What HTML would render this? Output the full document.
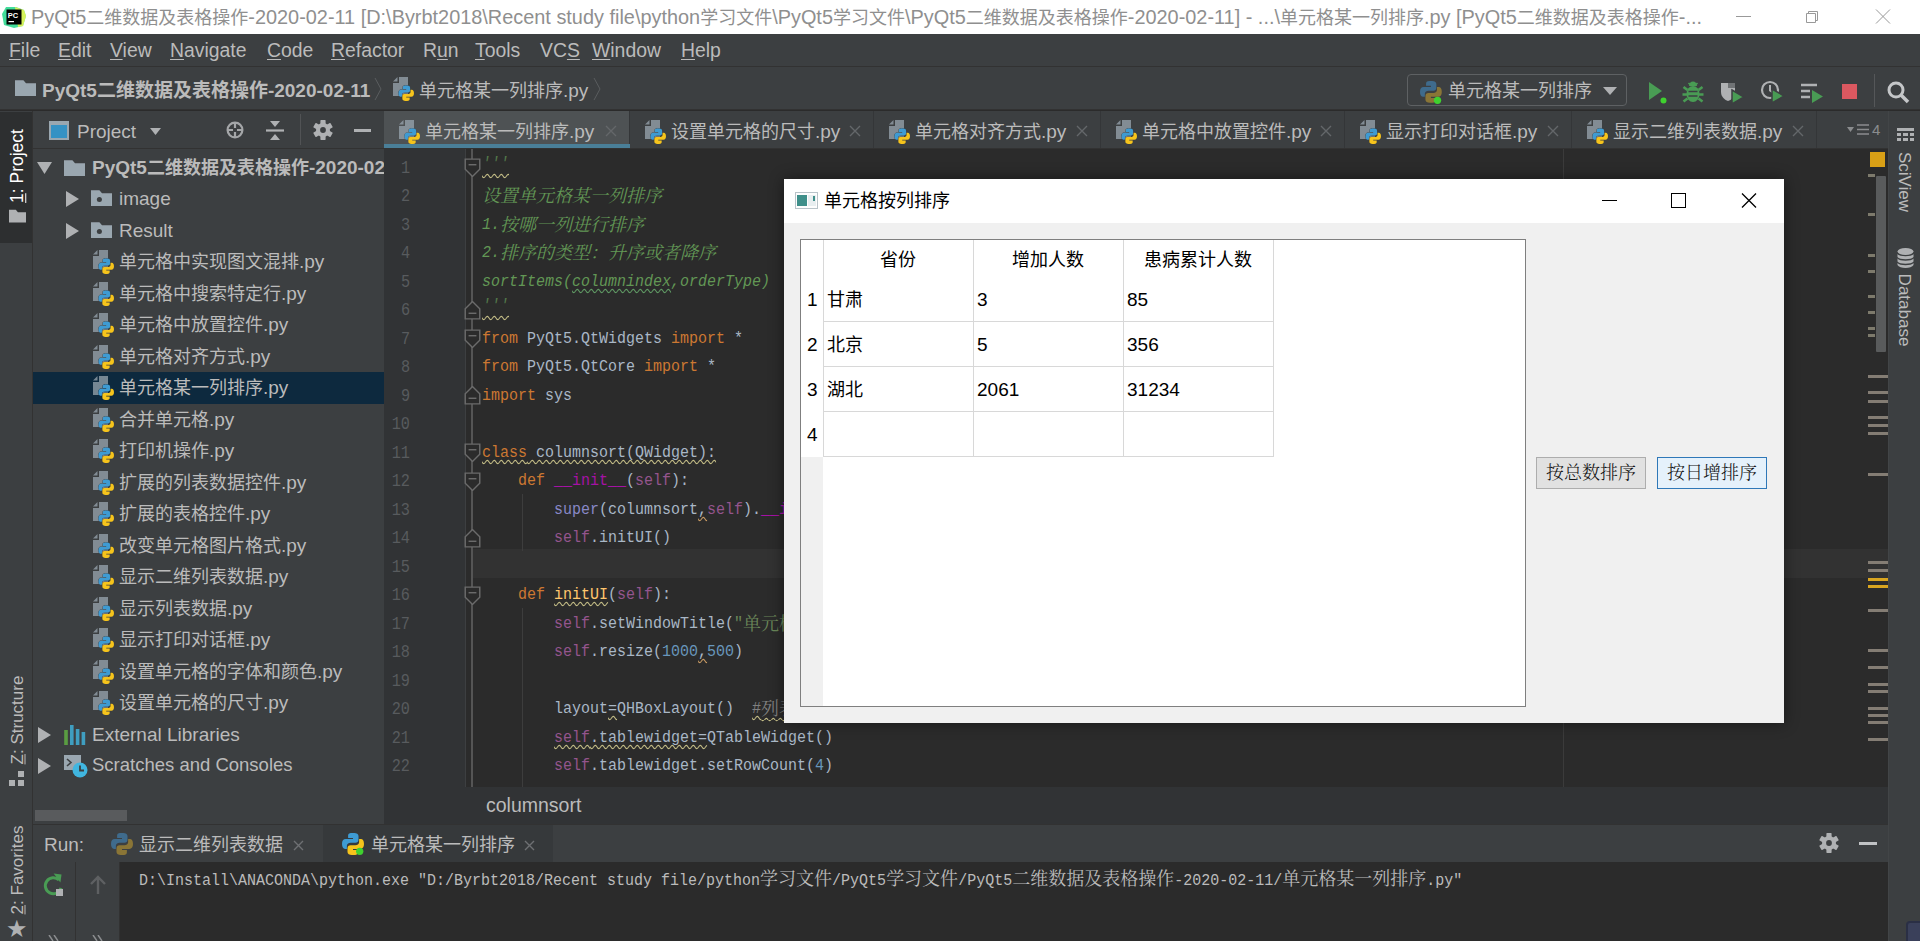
<!DOCTYPE html><html lang="zh"><head><meta charset="utf-8"><title>PyCharm</title><style>

*{box-sizing:border-box;margin:0;padding:0}
html,body{width:1920px;height:941px;overflow:hidden;background:#2b2b2b}
body{position:relative;font-family:"Liberation Sans","Noto Sans CJK SC",sans-serif;color:#bbbbbb;font-size:18px}
.abs{position:absolute}
.t{position:absolute;white-space:pre;line-height:1}
.ui{font-family:"Liberation Sans","Noto Sans CJK SC",sans-serif}
.mono{font-family:"Liberation Mono","Noto Serif CJK SC",monospace}
u{text-decoration:underline;text-underline-offset:2px;text-decoration-thickness:1px}
#titlebar{left:0;top:0;width:1920px;height:34px;background:#ffffff}
#menubar{left:0;top:34px;width:1920px;height:32px;background:#3c3f41}
#navbar{left:0;top:66px;width:1920px;height:44px;background:#3c3f41;border-top:1px solid #323232;border-bottom:1px solid #323232}
#leftstrip{left:0;top:111px;width:33px;height:830px;background:#3c3f41;border-right:1px solid #323232}
#rightstrip{left:1888px;top:111px;width:32px;height:830px;background:#3c3f41;border-left:1px solid #424547}
#proj{left:33px;top:111px;width:351px;height:713px;background:#3c3f41}
#projhead{left:33px;top:111px;width:351px;height:38px;background:#3c3f41;border-bottom:1px solid #323232}
#tabs{left:384px;top:111px;width:1504px;height:38px;background:#3c3f41;border-bottom:1px solid #323232}
#editor{left:384px;top:149px;width:1504px;height:638px;background:#2b2b2b;overflow:hidden}
#gutter{left:0;top:0;width:82px;height:638px;background:#313335;border-right:1px solid #3d3f41}
#crumbs{left:384px;top:787px;width:1504px;height:37px;background:#313335}
#runbar{left:33px;top:824px;width:1855px;height:38px;background:#3c3f41;border-top:1px solid #323232}
#console{left:33px;top:862px;width:1855px;height:79px;background:#2b2b2b}
.row{position:absolute;left:0;width:351px;height:31.5px}
.ln{position:absolute;left:0;width:26px;text-align:right;color:#585b5e;font-family:"Liberation Mono","Noto Serif CJK SC",monospace;font-size:19px;line-height:28.5px;height:28.5px;transform:translateY(2px) scaleX(.8);transform-origin:100% 50%}
.cl{position:absolute;left:98px;white-space:pre;font-family:"Liberation Mono","Noto Serif CJK SC",monospace;font-size:15px;line-height:28.5px;height:28.5px;color:#a9b7c6;transform:translateY(3px) scaleY(1.15);transform-origin:0 19px}
.cl .z{font-size:18px;display:inline-block;transform:scaleY(.87);transform-origin:0 19px;line-height:28.5px;vertical-align:top}
.k{color:#cc7832}.c{color:#629755;font-style:italic}.s{color:#94558d}.b{color:#8888c6}.m{color:#a512a5}.n{color:#6897bb}.g{color:#808080}.st{color:#6a8759}
.con{transform:scaleY(1.15);transform-origin:0 12px}
.con .z{font-size:18px;display:inline-block;transform:scaleY(.87);transform-origin:0 14px}
.cl .q{color:#52774a;position:relative;top:-3px;text-underline-offset:4px}
.cl .gw{text-decoration-color:#5f9a63}
.cl .ow{text-decoration-color:#c99a62}
.wv .z{text-decoration:underline wavy #c4bd86;text-decoration-thickness:1.300px;text-underline-offset:2px;text-decoration-skip-ink:none}
.wv{text-decoration:underline wavy #c4bd86;text-decoration-thickness:1.300px;text-underline-offset:2px;text-decoration-skip-ink:none}

</style></head><body>
<div id="titlebar" class="abs">
<svg class="abs" style="left:2px;top:6px" width="24" height="22" viewBox="0 0 24 22"><path d="M0 8L4 1l10 0 8 3 2 6-3 10-9 2-10-3z" fill="#21d789" opacity=".85"/><path d="M13 1l9 3 2 6-3 10-5 1z" fill="#fcf84a" opacity=".8"/><rect x="4.500" y="3.500" width="15" height="15" fill="#000"/><rect x="6.500" y="15" width="5.500" height="1.200" fill="#fff"/><text x="5.800" y="11.500" font-family="Liberation Sans,sans-serif" font-weight="bold" font-size="7.500" fill="#fff">PC</text></svg>
<div class="t" id="tt" style="left:31px;top:7.5px;font-size:19.9px;color:#8f8f8f;">PyQt5<span style="font-size:18px">二维数据及表格操作</span>-2020-02-11 [D:\Byrbt2018\Recent study file\python<span style="font-size:18px">学习文件</span>\PyQt5<span style="font-size:18px">学习文件</span>\PyQt5<span style="font-size:18px">二维数据及表格操作</span>-2020-02-11] - ...\<span style="font-size:18px">单元格某一列排序</span>.py [PyQt5<span style="font-size:18px">二维数据及表格操作</span>-...</div>
<svg class="abs" style="left:1730px;top:0" width="190" height="34" viewBox="0 0 190 34"><path d="M6 16.500h15" stroke="#999" stroke-width="1"/><path d="M76.500 13.500h9v9h-9z M78.500 13.500v-2h9v9h-2" stroke="#999" stroke-width="1" fill="none"/><path d="M146 9.500l14 14 M160 9.500l-14 14" stroke="#999" stroke-width="1"/></svg>
</div>
<div id="menubar" class="abs">
<div class="t" style="left:9px;top:6.5px;font-size:19.4px;color:#bbbbbb;"><u>F</u>ile</div>
<div class="t" style="left:58px;top:6.5px;font-size:19.4px;color:#bbbbbb;"><u>E</u>dit</div>
<div class="t" style="left:110px;top:6.5px;font-size:19.4px;color:#bbbbbb;"><u>V</u>iew</div>
<div class="t" style="left:170px;top:6.5px;font-size:19.4px;color:#bbbbbb;"><u>N</u>avigate</div>
<div class="t" style="left:267px;top:6.5px;font-size:19.4px;color:#bbbbbb;"><u>C</u>ode</div>
<div class="t" style="left:331px;top:6.5px;font-size:19.4px;color:#bbbbbb;"><u>R</u>efactor</div>
<div class="t" style="left:423px;top:6.5px;font-size:19.4px;color:#bbbbbb;">R<u>u</u>n</div>
<div class="t" style="left:475px;top:6.5px;font-size:19.4px;color:#bbbbbb;"><u>T</u>ools</div>
<div class="t" style="left:540px;top:6.5px;font-size:19.4px;color:#bbbbbb;">VC<u>S</u></div>
<div class="t" style="left:592px;top:6.5px;font-size:19.4px;color:#bbbbbb;"><u>W</u>indow</div>
<div class="t" style="left:681px;top:6.5px;font-size:19.4px;color:#bbbbbb;"><u>H</u>elp</div>
</div>
<div id="navbar" class="abs">
<svg class="abs" style="left:15px;top:13px" width="21" height="16" viewBox="0 0 20 15"><path d="M0 0h8l2.500 3H20v12H0z" fill="#9aa7b0"/></svg>
<div class="t" style="left:42px;top:14px;font-size:19px;color:#bbbbbb;font-weight:bold">PyQt5二维数据及表格操作-2020-02-11</div>
<svg class="abs" style="left:374px;top:10px" width="9" height="24" viewBox="0 0 9 24"><path d="M1 1l6 11-6 11" stroke="#5a5d5f" stroke-width="1" fill="none"/></svg>
<svg class="abs" style="left:393px;top:10px" width="21" height="25" viewBox="0 0 21 25"><path d="M6 0h9v19H0V6h6z" fill="#9aa7b0" opacity=".75"/><path d="M4.500 0v4.500H0z" fill="#9aa7b0" opacity=".75"/><g transform="translate(5.500 8.500) scale(.86)" stroke="#3c3f41" stroke-width=".9" paint-order="stroke"><path d="M8 0C5.500 0 5 1 5 2.500V4h4v1H3C1 5 0 6.500 0 9s1 4 2.500 4H4v-2.500C4 9 5.500 8 7 8h4c1.500 0 2.500-1 2.500-2.500v-3C13.500 1 12 0 10 0z" fill="#3e9bd3"/><path d="M10 18c2.500 0 3-1 3-2.500V14H9v-1h6c2 0 3-1.500 3-4s-1-4-2.500-4H14v2.500C14 9 12.500 10 11 10H7c-1.500 0-2.500 1-2.500 2.500v3C4.500 17 6 18 8 18z" fill="#f6c41c"/></g></svg>
<div class="t" style="left:419px;top:14px;font-size:19px;color:#bbbbbb;"><span style="font-size:18px">单元格某一列排序</span>.py</div>
<svg class="abs" style="left:593px;top:10px" width="9" height="24" viewBox="0 0 9 24"><path d="M1 1l6 11-6 11" stroke="#5a5d5f" stroke-width="1" fill="none"/></svg>
<div class="abs" style="left:1407px;top:7px;width:220px;height:32px;border:1px solid #5e6163;border-radius:4px;background:#3c3f41"></div>
<svg class="abs" style="left:1420px;top:14px" width="23" height="23" viewBox="0 0 19 19"><path d="M8 0C5.500 0 5 1 5 2.500V4h4v1H3C1 5 0 6.500 0 9s1 4 2.500 4H4v-2.500C4 9 5.500 8 7 8h4c1.500 0 2.500-1 2.500-2.500v-3C13.500 1 12 0 10 0z" fill="#3f6b8c"/><path d="M10 18c2.500 0 3-1 3-2.500V14H9v-1h6c2 0 3-1.500 3-4s-1-4-2.500-4H14v2.500C14 9 12.500 10 11 10H7c-1.500 0-2.500 1-2.500 2.500v3C4.500 17 6 18 8 18z" fill="#8a7536"/><circle cx="14.500" cy="16" r="3" fill="#3fd12f"/></svg>
<div class="t" style="left:1448px;top:15px;font-size:18px;color:#bbbbbb;">单元格某一列排序</div>
<svg class="abs" style="left:1603px;top:20px" width="14" height="8" viewBox="0 0 14 8"><path d="M0 0h14L7 8z" fill="#afb1b3"/></svg>
<svg class="abs" style="left:1646px;top:12px" width="22" height="26" viewBox="0 0 22 26"><path d="M3 3l13 9-13 9z" fill="#499c54"/><circle cx="17.500" cy="21.500" r="3" fill="#3fd12f"/></svg>
<svg class="abs" style="left:1682px;top:13px" width="22" height="23" viewBox="0 0 22 23"><path d="M5.500 10L1.500 7 M16.500 10l4-3 M5 14.500H.5 M17 14.500h4.500 M5.500 18.500l-4 3 M16.500 18.500l4 3" stroke="#499c54" stroke-width="2.600"/><ellipse cx="11" cy="14" rx="6.500" ry="8" fill="#499c54"/><path d="M7 6a4 4.500 0 0 1 8 0z" fill="#499c54"/><path d="M6.500 3l2 2 M15.500 3l-2 2" stroke="#499c54" stroke-width="1.600"/><path d="M6.500 11.500h9 M6.500 16h9" stroke="#3c3f41" stroke-width="1.700"/></svg>
<svg class="abs" style="left:1720px;top:14px" width="26" height="24" viewBox="0 0 26 24"><path d="M1 2h14v9c0 5-4 8-7 9-3-1-7-4-7-9z" fill="#afb1b3"/><path d="M8 2h7v5H8z" fill="#3c3f41" opacity=".55"/><path d="M12 9l12 7-12 7z" fill="#499c54" stroke="#3c3f41" stroke-width="1.500"/></svg>
<svg class="abs" style="left:1760px;top:13px" width="26" height="25" viewBox="0 0 26 25"><circle cx="10" cy="10" r="8" fill="none" stroke="#afb1b3" stroke-width="2.200"/><path d="M10 5v5.500l3 2" stroke="#afb1b3" stroke-width="2" fill="none"/><path d="M12 9l12 7-12 7z" fill="#499c54" stroke="#3c3f41" stroke-width="1.500"/></svg>
<svg class="abs" style="left:1800px;top:15px" width="24" height="22" viewBox="0 0 24 22"><path d="M1 3h16 M1 9h9 M1 15h9" stroke="#afb1b3" stroke-width="2.600"/><path d="M12 8l11 6.500-11 6.500z" fill="#499c54"/></svg>
<div class="abs" style="left:1842px;top:17px;width:15px;height:15px;background:#db5860"></div>
<div class="abs" style="left:1874px;top:7px;width:1px;height:33px;background:#555759"></div>
<svg class="abs" style="left:1886px;top:13px" width="24" height="24" viewBox="0 0 24 24"><circle cx="10" cy="10" r="7" fill="none" stroke="#c4c6c8" stroke-width="3"/><path d="M15 15l7 7" stroke="#c4c6c8" stroke-width="3.500"/></svg>
</div>
<div id="leftstrip" class="abs">
<div class="abs" style="left:0;top:1px;width:32px;height:131px;background:#2d2f30"></div>
<div class="t" style="left:18px;top:55px;font-size:17.5px;color:#ffffff;transform:translate(-50%,-50%) rotate(-90deg)"><u>1</u>: Project</div>
<svg class="abs" style="left:9px;top:98px" width="17" height="14" viewBox="0 0 20 15"><path d="M0 0h8l2.500 3H20v12H0z" fill="#afb1b3"/></svg>
<div class="t" style="left:17px;top:609px;font-size:17px;color:#bbbbbb;transform:translate(-50%,-50%) rotate(-90deg)"><u>Z</u>: Structure</div>
<svg class="abs" style="left:9px;top:660px" width="16" height="15" viewBox="0 0 16 15"><path d="M9 0h6v6H9z M0 9h6v6H0z M9 9h6v6H9z" fill="#afb1b3"/></svg>
<div class="t" style="left:17px;top:759px;font-size:17px;color:#bbbbbb;transform:translate(-50%,-50%) rotate(-90deg)"><u>2</u>: Favorites</div>
<div class="t" style="left:6px;top:806px;font-size:24px;color:#afb1b3;font-family:DejaVu Sans,sans-serif">★</div>
</div>
<div id="proj" class="abs"></div>
<div id="projhead" class="abs">
<svg class="abs" style="left:16px;top:10px" width="20" height="19" viewBox="0 0 20 19"><rect x="0" y="0" width="20" height="19" fill="#9aa7b0"/><rect x="2" y="4" width="16" height="13" fill="#3592c4"/></svg>
<div class="t" style="left:44px;top:11px;font-size:19px;color:#bbbbbb;">Project</div>
<svg class="abs" style="left:117px;top:17px" width="11" height="7" viewBox="0 0 11 7"><path d="M0 0h11L5.500 7z" fill="#afb1b3"/></svg>
<svg class="abs" style="left:193px;top:10px" width="18" height="18" viewBox="0 0 18 18"><circle cx="9" cy="9" r="7.400" fill="none" stroke="#a4a6a8" stroke-width="2.200"/><path d="M9 2v5 M9 11v5 M2 9h5 M11 9h5" stroke="#a4a6a8" stroke-width="2.200"/></svg>
<svg class="abs" style="left:232px;top:9px" width="20" height="21" viewBox="0 0 20 21"><path d="M1 10.500h18" stroke="#afb1b3" stroke-width="2.200"/><path d="M5 1h10l-5 6z M5 20h10l-5-6z" fill="#afb1b3"/></svg>
<div class="abs" style="left:267px;top:3px;width:1px;height:31px;background:#515355"></div>
<svg class="abs" style="left:280px;top:9px" width="20" height="20" viewBox="-10 -10 20 20"><g fill="#afb1b3"><circle r="7"/><rect x="-2.600" y="-9.900" width="5.200" height="6" rx=".6" transform="rotate(0)"/><rect x="-2.600" y="-9.900" width="5.200" height="6" rx=".6" transform="rotate(60)"/><rect x="-2.600" y="-9.900" width="5.200" height="6" rx=".6" transform="rotate(120)"/><rect x="-2.600" y="-9.900" width="5.200" height="6" rx=".6" transform="rotate(180)"/><rect x="-2.600" y="-9.900" width="5.200" height="6" rx=".6" transform="rotate(240)"/><rect x="-2.600" y="-9.900" width="5.200" height="6" rx=".6" transform="rotate(300)"/></g><circle r="2.900" fill="#3c3f41"/></svg>
<div class="abs" style="left:321px;top:18px;width:17px;height:3px;background:#afb1b3"></div>
</div>
<div class="abs" style="left:33px;top:149px;width:351px;height:640px;overflow:hidden">
<div class="row" style="top:2.5px;">
<svg class="abs" style="left:4px;top:10px" width="15" height="12" viewBox="0 0 15 12"><path d="M0 0h15L7.500 12z" fill="#afb1b3"/></svg>
<svg class="abs" style="left:31px;top:8px" width="21" height="16" viewBox="0 0 20 15"><path d="M0 0h8l2.500 3H20v12H0z" fill="#9aa7b0"/></svg>
<div class="t" style="left:59px;top:6px;font-size:19px;color:#bbbbbb;font-weight:bold">PyQt5<span style="font-size:18px">二维数据及表格操作</span>-2020-02-11</div>
</div>
<div class="row" style="top:34px;">
<svg class="abs" style="left:33px;top:8px" width="13" height="16" viewBox="0 0 13 16"><path d="M0 0v16l13-8z" fill="#afb1b3"/></svg>
<svg class="abs" style="left:58px;top:7px" width="21" height="16" viewBox="0 0 20 15"><path d="M0 0h8l2.500 3H20v12H0z" fill="#9aa7b0"/><circle cx="8" cy="9" r="2.400" fill="#3c3f41"/></svg>
<div class="t" style="left:86px;top:6px;font-size:19px;color:#bbbbbb;">image</div>
</div>
<div class="row" style="top:65.5px;">
<svg class="abs" style="left:33px;top:8px" width="13" height="16" viewBox="0 0 13 16"><path d="M0 0v16l13-8z" fill="#afb1b3"/></svg>
<svg class="abs" style="left:58px;top:7px" width="21" height="16" viewBox="0 0 20 15"><path d="M0 0h8l2.500 3H20v12H0z" fill="#9aa7b0"/><circle cx="8" cy="9" r="2.400" fill="#3c3f41"/></svg>
<div class="t" style="left:86px;top:6px;font-size:19px;color:#bbbbbb;">Result</div>
</div>
<div class="row" style="top:97px;">
<svg class="abs" style="left:60px;top:4px" width="21" height="25" viewBox="0 0 21 25"><path d="M6 0h9v19H0V6h6z" fill="#9aa7b0" opacity=".75"/><path d="M4.500 0v4.500H0z" fill="#9aa7b0" opacity=".75"/><g transform="translate(5.500 8.500) scale(.86)" stroke="#3c3f41" stroke-width=".9" paint-order="stroke"><path d="M8 0C5.500 0 5 1 5 2.500V4h4v1H3C1 5 0 6.500 0 9s1 4 2.500 4H4v-2.500C4 9 5.500 8 7 8h4c1.500 0 2.500-1 2.500-2.500v-3C13.500 1 12 0 10 0z" fill="#3e9bd3"/><path d="M10 18c2.500 0 3-1 3-2.500V14H9v-1h6c2 0 3-1.500 3-4s-1-4-2.500-4H14v2.500C14 9 12.500 10 11 10H7c-1.500 0-2.500 1-2.500 2.500v3C4.500 17 6 18 8 18z" fill="#f6c41c"/></g></svg>
<div class="t" style="left:86px;top:6px;font-size:19px;color:#bbbbbb;"><span style="font-size:18px">单元格中实现图文混排</span>.py</div>
</div>
<div class="row" style="top:128.5px;">
<svg class="abs" style="left:60px;top:4px" width="21" height="25" viewBox="0 0 21 25"><path d="M6 0h9v19H0V6h6z" fill="#9aa7b0" opacity=".75"/><path d="M4.500 0v4.500H0z" fill="#9aa7b0" opacity=".75"/><g transform="translate(5.500 8.500) scale(.86)" stroke="#3c3f41" stroke-width=".9" paint-order="stroke"><path d="M8 0C5.500 0 5 1 5 2.500V4h4v1H3C1 5 0 6.500 0 9s1 4 2.500 4H4v-2.500C4 9 5.500 8 7 8h4c1.500 0 2.500-1 2.500-2.500v-3C13.500 1 12 0 10 0z" fill="#3e9bd3"/><path d="M10 18c2.500 0 3-1 3-2.500V14H9v-1h6c2 0 3-1.500 3-4s-1-4-2.500-4H14v2.500C14 9 12.500 10 11 10H7c-1.500 0-2.500 1-2.500 2.500v3C4.500 17 6 18 8 18z" fill="#f6c41c"/></g></svg>
<div class="t" style="left:86px;top:6px;font-size:19px;color:#bbbbbb;"><span style="font-size:18px">单元格中搜索特定行</span>.py</div>
</div>
<div class="row" style="top:160px;">
<svg class="abs" style="left:60px;top:4px" width="21" height="25" viewBox="0 0 21 25"><path d="M6 0h9v19H0V6h6z" fill="#9aa7b0" opacity=".75"/><path d="M4.500 0v4.500H0z" fill="#9aa7b0" opacity=".75"/><g transform="translate(5.500 8.500) scale(.86)" stroke="#3c3f41" stroke-width=".9" paint-order="stroke"><path d="M8 0C5.500 0 5 1 5 2.500V4h4v1H3C1 5 0 6.500 0 9s1 4 2.500 4H4v-2.500C4 9 5.500 8 7 8h4c1.500 0 2.500-1 2.500-2.500v-3C13.500 1 12 0 10 0z" fill="#3e9bd3"/><path d="M10 18c2.500 0 3-1 3-2.500V14H9v-1h6c2 0 3-1.500 3-4s-1-4-2.500-4H14v2.500C14 9 12.500 10 11 10H7c-1.500 0-2.500 1-2.500 2.500v3C4.500 17 6 18 8 18z" fill="#f6c41c"/></g></svg>
<div class="t" style="left:86px;top:6px;font-size:19px;color:#bbbbbb;"><span style="font-size:18px">单元格中放置控件</span>.py</div>
</div>
<div class="row" style="top:191.5px;">
<svg class="abs" style="left:60px;top:4px" width="21" height="25" viewBox="0 0 21 25"><path d="M6 0h9v19H0V6h6z" fill="#9aa7b0" opacity=".75"/><path d="M4.500 0v4.500H0z" fill="#9aa7b0" opacity=".75"/><g transform="translate(5.500 8.500) scale(.86)" stroke="#3c3f41" stroke-width=".9" paint-order="stroke"><path d="M8 0C5.500 0 5 1 5 2.500V4h4v1H3C1 5 0 6.500 0 9s1 4 2.500 4H4v-2.500C4 9 5.500 8 7 8h4c1.500 0 2.500-1 2.500-2.500v-3C13.500 1 12 0 10 0z" fill="#3e9bd3"/><path d="M10 18c2.500 0 3-1 3-2.500V14H9v-1h6c2 0 3-1.500 3-4s-1-4-2.500-4H14v2.500C14 9 12.500 10 11 10H7c-1.500 0-2.500 1-2.500 2.500v3C4.500 17 6 18 8 18z" fill="#f6c41c"/></g></svg>
<div class="t" style="left:86px;top:6px;font-size:19px;color:#bbbbbb;"><span style="font-size:18px">单元格对齐方式</span>.py</div>
</div>
<div class="row" style="top:223px;background:#0d293e">
<svg class="abs" style="left:60px;top:4px" width="21" height="25" viewBox="0 0 21 25"><path d="M6 0h9v19H0V6h6z" fill="#9aa7b0" opacity=".75"/><path d="M4.500 0v4.500H0z" fill="#9aa7b0" opacity=".75"/><g transform="translate(5.500 8.500) scale(.86)" stroke="#0d293e" stroke-width=".9" paint-order="stroke"><path d="M8 0C5.500 0 5 1 5 2.500V4h4v1H3C1 5 0 6.500 0 9s1 4 2.500 4H4v-2.500C4 9 5.500 8 7 8h4c1.500 0 2.500-1 2.500-2.500v-3C13.500 1 12 0 10 0z" fill="#3e9bd3"/><path d="M10 18c2.500 0 3-1 3-2.500V14H9v-1h6c2 0 3-1.500 3-4s-1-4-2.500-4H14v2.500C14 9 12.500 10 11 10H7c-1.500 0-2.500 1-2.500 2.500v3C4.500 17 6 18 8 18z" fill="#f6c41c"/></g></svg>
<div class="t" style="left:86px;top:6px;font-size:19px;color:#bbbbbb;"><span style="font-size:18px">单元格某一列排序</span>.py</div>
</div>
<div class="row" style="top:254.5px;">
<svg class="abs" style="left:60px;top:4px" width="21" height="25" viewBox="0 0 21 25"><path d="M6 0h9v19H0V6h6z" fill="#9aa7b0" opacity=".75"/><path d="M4.500 0v4.500H0z" fill="#9aa7b0" opacity=".75"/><g transform="translate(5.500 8.500) scale(.86)" stroke="#3c3f41" stroke-width=".9" paint-order="stroke"><path d="M8 0C5.500 0 5 1 5 2.500V4h4v1H3C1 5 0 6.500 0 9s1 4 2.500 4H4v-2.500C4 9 5.500 8 7 8h4c1.500 0 2.500-1 2.500-2.500v-3C13.500 1 12 0 10 0z" fill="#3e9bd3"/><path d="M10 18c2.500 0 3-1 3-2.500V14H9v-1h6c2 0 3-1.500 3-4s-1-4-2.500-4H14v2.500C14 9 12.500 10 11 10H7c-1.500 0-2.500 1-2.500 2.500v3C4.500 17 6 18 8 18z" fill="#f6c41c"/></g></svg>
<div class="t" style="left:86px;top:6px;font-size:19px;color:#bbbbbb;"><span style="font-size:18px">合并单元格</span>.py</div>
</div>
<div class="row" style="top:286px;">
<svg class="abs" style="left:60px;top:4px" width="21" height="25" viewBox="0 0 21 25"><path d="M6 0h9v19H0V6h6z" fill="#9aa7b0" opacity=".75"/><path d="M4.500 0v4.500H0z" fill="#9aa7b0" opacity=".75"/><g transform="translate(5.500 8.500) scale(.86)" stroke="#3c3f41" stroke-width=".9" paint-order="stroke"><path d="M8 0C5.500 0 5 1 5 2.500V4h4v1H3C1 5 0 6.500 0 9s1 4 2.500 4H4v-2.500C4 9 5.500 8 7 8h4c1.500 0 2.500-1 2.500-2.500v-3C13.500 1 12 0 10 0z" fill="#3e9bd3"/><path d="M10 18c2.500 0 3-1 3-2.500V14H9v-1h6c2 0 3-1.500 3-4s-1-4-2.500-4H14v2.500C14 9 12.500 10 11 10H7c-1.500 0-2.500 1-2.500 2.500v3C4.500 17 6 18 8 18z" fill="#f6c41c"/></g></svg>
<div class="t" style="left:86px;top:6px;font-size:19px;color:#bbbbbb;"><span style="font-size:18px">打印机操作</span>.py</div>
</div>
<div class="row" style="top:317.5px;">
<svg class="abs" style="left:60px;top:4px" width="21" height="25" viewBox="0 0 21 25"><path d="M6 0h9v19H0V6h6z" fill="#9aa7b0" opacity=".75"/><path d="M4.500 0v4.500H0z" fill="#9aa7b0" opacity=".75"/><g transform="translate(5.500 8.500) scale(.86)" stroke="#3c3f41" stroke-width=".9" paint-order="stroke"><path d="M8 0C5.500 0 5 1 5 2.500V4h4v1H3C1 5 0 6.500 0 9s1 4 2.500 4H4v-2.500C4 9 5.500 8 7 8h4c1.500 0 2.500-1 2.500-2.500v-3C13.500 1 12 0 10 0z" fill="#3e9bd3"/><path d="M10 18c2.500 0 3-1 3-2.500V14H9v-1h6c2 0 3-1.500 3-4s-1-4-2.500-4H14v2.500C14 9 12.500 10 11 10H7c-1.500 0-2.500 1-2.500 2.500v3C4.500 17 6 18 8 18z" fill="#f6c41c"/></g></svg>
<div class="t" style="left:86px;top:6px;font-size:19px;color:#bbbbbb;"><span style="font-size:18px">扩展的列表数据控件</span>.py</div>
</div>
<div class="row" style="top:349px;">
<svg class="abs" style="left:60px;top:4px" width="21" height="25" viewBox="0 0 21 25"><path d="M6 0h9v19H0V6h6z" fill="#9aa7b0" opacity=".75"/><path d="M4.500 0v4.500H0z" fill="#9aa7b0" opacity=".75"/><g transform="translate(5.500 8.500) scale(.86)" stroke="#3c3f41" stroke-width=".9" paint-order="stroke"><path d="M8 0C5.500 0 5 1 5 2.500V4h4v1H3C1 5 0 6.500 0 9s1 4 2.500 4H4v-2.500C4 9 5.500 8 7 8h4c1.500 0 2.500-1 2.500-2.500v-3C13.500 1 12 0 10 0z" fill="#3e9bd3"/><path d="M10 18c2.500 0 3-1 3-2.500V14H9v-1h6c2 0 3-1.500 3-4s-1-4-2.500-4H14v2.500C14 9 12.500 10 11 10H7c-1.500 0-2.500 1-2.500 2.500v3C4.500 17 6 18 8 18z" fill="#f6c41c"/></g></svg>
<div class="t" style="left:86px;top:6px;font-size:19px;color:#bbbbbb;"><span style="font-size:18px">扩展的表格控件</span>.py</div>
</div>
<div class="row" style="top:380.5px;">
<svg class="abs" style="left:60px;top:4px" width="21" height="25" viewBox="0 0 21 25"><path d="M6 0h9v19H0V6h6z" fill="#9aa7b0" opacity=".75"/><path d="M4.500 0v4.500H0z" fill="#9aa7b0" opacity=".75"/><g transform="translate(5.500 8.500) scale(.86)" stroke="#3c3f41" stroke-width=".9" paint-order="stroke"><path d="M8 0C5.500 0 5 1 5 2.500V4h4v1H3C1 5 0 6.500 0 9s1 4 2.500 4H4v-2.500C4 9 5.500 8 7 8h4c1.500 0 2.500-1 2.500-2.500v-3C13.500 1 12 0 10 0z" fill="#3e9bd3"/><path d="M10 18c2.500 0 3-1 3-2.500V14H9v-1h6c2 0 3-1.500 3-4s-1-4-2.500-4H14v2.500C14 9 12.500 10 11 10H7c-1.500 0-2.500 1-2.500 2.500v3C4.500 17 6 18 8 18z" fill="#f6c41c"/></g></svg>
<div class="t" style="left:86px;top:6px;font-size:19px;color:#bbbbbb;"><span style="font-size:18px">改变单元格图片格式</span>.py</div>
</div>
<div class="row" style="top:412px;">
<svg class="abs" style="left:60px;top:4px" width="21" height="25" viewBox="0 0 21 25"><path d="M6 0h9v19H0V6h6z" fill="#9aa7b0" opacity=".75"/><path d="M4.500 0v4.500H0z" fill="#9aa7b0" opacity=".75"/><g transform="translate(5.500 8.500) scale(.86)" stroke="#3c3f41" stroke-width=".9" paint-order="stroke"><path d="M8 0C5.500 0 5 1 5 2.500V4h4v1H3C1 5 0 6.500 0 9s1 4 2.500 4H4v-2.500C4 9 5.500 8 7 8h4c1.500 0 2.500-1 2.500-2.500v-3C13.500 1 12 0 10 0z" fill="#3e9bd3"/><path d="M10 18c2.500 0 3-1 3-2.500V14H9v-1h6c2 0 3-1.500 3-4s-1-4-2.500-4H14v2.500C14 9 12.500 10 11 10H7c-1.500 0-2.500 1-2.500 2.500v3C4.500 17 6 18 8 18z" fill="#f6c41c"/></g></svg>
<div class="t" style="left:86px;top:6px;font-size:19px;color:#bbbbbb;"><span style="font-size:18px">显示二维列表数据</span>.py</div>
</div>
<div class="row" style="top:443.5px;">
<svg class="abs" style="left:60px;top:4px" width="21" height="25" viewBox="0 0 21 25"><path d="M6 0h9v19H0V6h6z" fill="#9aa7b0" opacity=".75"/><path d="M4.500 0v4.500H0z" fill="#9aa7b0" opacity=".75"/><g transform="translate(5.500 8.500) scale(.86)" stroke="#3c3f41" stroke-width=".9" paint-order="stroke"><path d="M8 0C5.500 0 5 1 5 2.500V4h4v1H3C1 5 0 6.500 0 9s1 4 2.500 4H4v-2.500C4 9 5.500 8 7 8h4c1.500 0 2.500-1 2.500-2.500v-3C13.500 1 12 0 10 0z" fill="#3e9bd3"/><path d="M10 18c2.500 0 3-1 3-2.500V14H9v-1h6c2 0 3-1.500 3-4s-1-4-2.500-4H14v2.500C14 9 12.500 10 11 10H7c-1.500 0-2.500 1-2.500 2.500v3C4.500 17 6 18 8 18z" fill="#f6c41c"/></g></svg>
<div class="t" style="left:86px;top:6px;font-size:19px;color:#bbbbbb;"><span style="font-size:18px">显示列表数据</span>.py</div>
</div>
<div class="row" style="top:475px;">
<svg class="abs" style="left:60px;top:4px" width="21" height="25" viewBox="0 0 21 25"><path d="M6 0h9v19H0V6h6z" fill="#9aa7b0" opacity=".75"/><path d="M4.500 0v4.500H0z" fill="#9aa7b0" opacity=".75"/><g transform="translate(5.500 8.500) scale(.86)" stroke="#3c3f41" stroke-width=".9" paint-order="stroke"><path d="M8 0C5.500 0 5 1 5 2.500V4h4v1H3C1 5 0 6.500 0 9s1 4 2.500 4H4v-2.500C4 9 5.500 8 7 8h4c1.500 0 2.500-1 2.500-2.500v-3C13.500 1 12 0 10 0z" fill="#3e9bd3"/><path d="M10 18c2.500 0 3-1 3-2.500V14H9v-1h6c2 0 3-1.500 3-4s-1-4-2.500-4H14v2.500C14 9 12.500 10 11 10H7c-1.500 0-2.500 1-2.500 2.500v3C4.500 17 6 18 8 18z" fill="#f6c41c"/></g></svg>
<div class="t" style="left:86px;top:6px;font-size:19px;color:#bbbbbb;"><span style="font-size:18px">显示打印对话框</span>.py</div>
</div>
<div class="row" style="top:506.5px;">
<svg class="abs" style="left:60px;top:4px" width="21" height="25" viewBox="0 0 21 25"><path d="M6 0h9v19H0V6h6z" fill="#9aa7b0" opacity=".75"/><path d="M4.500 0v4.500H0z" fill="#9aa7b0" opacity=".75"/><g transform="translate(5.500 8.500) scale(.86)" stroke="#3c3f41" stroke-width=".9" paint-order="stroke"><path d="M8 0C5.500 0 5 1 5 2.500V4h4v1H3C1 5 0 6.500 0 9s1 4 2.500 4H4v-2.500C4 9 5.500 8 7 8h4c1.500 0 2.500-1 2.500-2.500v-3C13.500 1 12 0 10 0z" fill="#3e9bd3"/><path d="M10 18c2.500 0 3-1 3-2.500V14H9v-1h6c2 0 3-1.500 3-4s-1-4-2.500-4H14v2.500C14 9 12.500 10 11 10H7c-1.500 0-2.500 1-2.500 2.500v3C4.500 17 6 18 8 18z" fill="#f6c41c"/></g></svg>
<div class="t" style="left:86px;top:6px;font-size:19px;color:#bbbbbb;"><span style="font-size:18px">设置单元格的字体和颜色</span>.py</div>
</div>
<div class="row" style="top:538px;">
<svg class="abs" style="left:60px;top:4px" width="21" height="25" viewBox="0 0 21 25"><path d="M6 0h9v19H0V6h6z" fill="#9aa7b0" opacity=".75"/><path d="M4.500 0v4.500H0z" fill="#9aa7b0" opacity=".75"/><g transform="translate(5.500 8.500) scale(.86)" stroke="#3c3f41" stroke-width=".9" paint-order="stroke"><path d="M8 0C5.500 0 5 1 5 2.500V4h4v1H3C1 5 0 6.500 0 9s1 4 2.500 4H4v-2.500C4 9 5.500 8 7 8h4c1.500 0 2.500-1 2.500-2.500v-3C13.500 1 12 0 10 0z" fill="#3e9bd3"/><path d="M10 18c2.500 0 3-1 3-2.500V14H9v-1h6c2 0 3-1.500 3-4s-1-4-2.500-4H14v2.500C14 9 12.500 10 11 10H7c-1.500 0-2.500 1-2.500 2.500v3C4.500 17 6 18 8 18z" fill="#f6c41c"/></g></svg>
<div class="t" style="left:86px;top:6px;font-size:19px;color:#bbbbbb;"><span style="font-size:18px">设置单元格的尺寸</span>.py</div>
</div>
<div class="row" style="top:569.5px;">
<svg class="abs" style="left:5px;top:8px" width="13" height="16" viewBox="0 0 13 16"><path d="M0 0v16l13-8z" fill="#afb1b3"/></svg>
<svg class="abs" style="left:31px;top:6px" width="22" height="20" viewBox="0 0 22 20"><path d="M2 5v15" stroke="#62b543" stroke-width="3.600" opacity=".8"/><path d="M7.800 0v20 M13.600 4v16 M19.400 7v13" stroke="#40b6e0" stroke-width="3.600" opacity=".8"/></svg>
<div class="t" style="left:59px;top:6px;font-size:19px;color:#bbbbbb;">External Libraries</div>
</div>
<div class="row" style="top:601px;">
<svg class="abs" style="left:5px;top:8px" width="13" height="16" viewBox="0 0 13 16"><path d="M0 0v16l13-8z" fill="#afb1b3"/></svg>
<svg class="abs" style="left:31px;top:4px" width="24" height="24" viewBox="0 0 24 24"><path d="M0 1h17v15H0z" fill="#9aa7b0"/><path d="M3 5l4 3.500-4 3.500" stroke="#3c3f41" stroke-width="1.600" fill="none"/><circle cx="16" cy="16" r="7.500" fill="#40b6e0"/><path d="M16 11.500v5h4" stroke="#3c3f41" stroke-width="1.800" fill="none"/></svg>
<div class="t" style="left:59px;top:6px;font-size:18.5px;color:#bbbbbb;">Scratches and Consoles</div>
</div>
</div>
<div class="abs" style="left:35px;top:810px;width:92px;height:11px;background:#595b5d"></div>
<div id="tabs" class="abs">
<div class="abs" style="left:0px;top:0;width:246px;height:37px;background:#4e5254;border-right:1px solid #343638">
<svg class="abs" style="left:15px;top:9px" width="21" height="25" viewBox="0 0 21 25"><path d="M6 0h9v19H0V6h6z" fill="#9aa7b0" opacity=".75"/><path d="M4.500 0v4.500H0z" fill="#9aa7b0" opacity=".75"/><g transform="translate(5.500 8.500) scale(.86)" stroke="#4e5254" stroke-width=".9" paint-order="stroke"><path d="M8 0C5.500 0 5 1 5 2.500V4h4v1H3C1 5 0 6.500 0 9s1 4 2.500 4H4v-2.500C4 9 5.500 8 7 8h4c1.500 0 2.500-1 2.500-2.500v-3C13.500 1 12 0 10 0z" fill="#3e9bd3"/><path d="M10 18c2.500 0 3-1 3-2.500V14H9v-1h6c2 0 3-1.500 3-4s-1-4-2.500-4H14v2.500C14 9 12.500 10 11 10H7c-1.500 0-2.500 1-2.500 2.500v3C4.500 17 6 18 8 18z" fill="#f6c41c"/></g></svg>
<div class="t" style="left:41px;top:11px;font-size:19px;color:#bbbbbb;"><span style="font-size:18px">单元格某一列排序</span>.py</div>
<svg class="abs" style="left:221px;top:14px" width="12" height="12" viewBox="0 0 12 12"><path d="M1 1l10 10 M11 1l-10 10" stroke="#64676a" stroke-width="1.400"/></svg>
<div class="abs" style="left:0;top:33px;width:246px;height:4px;background:#4a7f98"></div>
</div>
<div class="abs" style="left:246px;top:0;width:244px;height:37px;border-right:1px solid #343638">
<svg class="abs" style="left:15px;top:9px" width="21" height="25" viewBox="0 0 21 25"><path d="M6 0h9v19H0V6h6z" fill="#9aa7b0" opacity=".75"/><path d="M4.500 0v4.500H0z" fill="#9aa7b0" opacity=".75"/><g transform="translate(5.500 8.500) scale(.86)" stroke="#3c3f41" stroke-width=".9" paint-order="stroke"><path d="M8 0C5.500 0 5 1 5 2.500V4h4v1H3C1 5 0 6.500 0 9s1 4 2.500 4H4v-2.500C4 9 5.500 8 7 8h4c1.500 0 2.500-1 2.500-2.500v-3C13.500 1 12 0 10 0z" fill="#3e9bd3"/><path d="M10 18c2.500 0 3-1 3-2.500V14H9v-1h6c2 0 3-1.500 3-4s-1-4-2.500-4H14v2.500C14 9 12.500 10 11 10H7c-1.500 0-2.500 1-2.500 2.500v3C4.500 17 6 18 8 18z" fill="#f6c41c"/></g></svg>
<div class="t" style="left:41px;top:11px;font-size:19px;color:#bbbbbb;"><span style="font-size:18px">设置单元格的尺寸</span>.py</div>
<svg class="abs" style="left:219px;top:14px" width="12" height="12" viewBox="0 0 12 12"><path d="M1 1l10 10 M11 1l-10 10" stroke="#64676a" stroke-width="1.400"/></svg>
</div>
<div class="abs" style="left:490px;top:0;width:227px;height:37px;border-right:1px solid #343638">
<svg class="abs" style="left:15px;top:9px" width="21" height="25" viewBox="0 0 21 25"><path d="M6 0h9v19H0V6h6z" fill="#9aa7b0" opacity=".75"/><path d="M4.500 0v4.500H0z" fill="#9aa7b0" opacity=".75"/><g transform="translate(5.500 8.500) scale(.86)" stroke="#3c3f41" stroke-width=".9" paint-order="stroke"><path d="M8 0C5.500 0 5 1 5 2.500V4h4v1H3C1 5 0 6.500 0 9s1 4 2.500 4H4v-2.500C4 9 5.500 8 7 8h4c1.500 0 2.500-1 2.500-2.500v-3C13.500 1 12 0 10 0z" fill="#3e9bd3"/><path d="M10 18c2.500 0 3-1 3-2.500V14H9v-1h6c2 0 3-1.500 3-4s-1-4-2.500-4H14v2.500C14 9 12.500 10 11 10H7c-1.500 0-2.500 1-2.500 2.500v3C4.500 17 6 18 8 18z" fill="#f6c41c"/></g></svg>
<div class="t" style="left:41px;top:11px;font-size:19px;color:#bbbbbb;"><span style="font-size:18px">单元格对齐方式</span>.py</div>
<svg class="abs" style="left:202px;top:14px" width="12" height="12" viewBox="0 0 12 12"><path d="M1 1l10 10 M11 1l-10 10" stroke="#64676a" stroke-width="1.400"/></svg>
</div>
<div class="abs" style="left:717px;top:0;width:244px;height:37px;border-right:1px solid #343638">
<svg class="abs" style="left:15px;top:9px" width="21" height="25" viewBox="0 0 21 25"><path d="M6 0h9v19H0V6h6z" fill="#9aa7b0" opacity=".75"/><path d="M4.500 0v4.500H0z" fill="#9aa7b0" opacity=".75"/><g transform="translate(5.500 8.500) scale(.86)" stroke="#3c3f41" stroke-width=".9" paint-order="stroke"><path d="M8 0C5.500 0 5 1 5 2.500V4h4v1H3C1 5 0 6.500 0 9s1 4 2.500 4H4v-2.500C4 9 5.500 8 7 8h4c1.500 0 2.500-1 2.500-2.500v-3C13.500 1 12 0 10 0z" fill="#3e9bd3"/><path d="M10 18c2.500 0 3-1 3-2.500V14H9v-1h6c2 0 3-1.500 3-4s-1-4-2.500-4H14v2.500C14 9 12.500 10 11 10H7c-1.500 0-2.500 1-2.500 2.500v3C4.500 17 6 18 8 18z" fill="#f6c41c"/></g></svg>
<div class="t" style="left:41px;top:11px;font-size:19px;color:#bbbbbb;"><span style="font-size:18px">单元格中放置控件</span>.py</div>
<svg class="abs" style="left:219px;top:14px" width="12" height="12" viewBox="0 0 12 12"><path d="M1 1l10 10 M11 1l-10 10" stroke="#64676a" stroke-width="1.400"/></svg>
</div>
<div class="abs" style="left:961px;top:0;width:227px;height:37px;border-right:1px solid #343638">
<svg class="abs" style="left:15px;top:9px" width="21" height="25" viewBox="0 0 21 25"><path d="M6 0h9v19H0V6h6z" fill="#9aa7b0" opacity=".75"/><path d="M4.500 0v4.500H0z" fill="#9aa7b0" opacity=".75"/><g transform="translate(5.500 8.500) scale(.86)" stroke="#3c3f41" stroke-width=".9" paint-order="stroke"><path d="M8 0C5.500 0 5 1 5 2.500V4h4v1H3C1 5 0 6.500 0 9s1 4 2.500 4H4v-2.500C4 9 5.500 8 7 8h4c1.500 0 2.500-1 2.500-2.500v-3C13.500 1 12 0 10 0z" fill="#3e9bd3"/><path d="M10 18c2.500 0 3-1 3-2.500V14H9v-1h6c2 0 3-1.500 3-4s-1-4-2.500-4H14v2.500C14 9 12.500 10 11 10H7c-1.500 0-2.500 1-2.500 2.500v3C4.500 17 6 18 8 18z" fill="#f6c41c"/></g></svg>
<div class="t" style="left:41px;top:11px;font-size:19px;color:#bbbbbb;"><span style="font-size:18px">显示打印对话框</span>.py</div>
<svg class="abs" style="left:202px;top:14px" width="12" height="12" viewBox="0 0 12 12"><path d="M1 1l10 10 M11 1l-10 10" stroke="#64676a" stroke-width="1.400"/></svg>
</div>
<div class="abs" style="left:1188px;top:0;width:245px;height:37px;border-right:1px solid #343638">
<svg class="abs" style="left:15px;top:9px" width="21" height="25" viewBox="0 0 21 25"><path d="M6 0h9v19H0V6h6z" fill="#9aa7b0" opacity=".75"/><path d="M4.500 0v4.500H0z" fill="#9aa7b0" opacity=".75"/><g transform="translate(5.500 8.500) scale(.86)" stroke="#3c3f41" stroke-width=".9" paint-order="stroke"><path d="M8 0C5.500 0 5 1 5 2.500V4h4v1H3C1 5 0 6.500 0 9s1 4 2.500 4H4v-2.500C4 9 5.500 8 7 8h4c1.500 0 2.500-1 2.500-2.500v-3C13.500 1 12 0 10 0z" fill="#3e9bd3"/><path d="M10 18c2.500 0 3-1 3-2.500V14H9v-1h6c2 0 3-1.500 3-4s-1-4-2.500-4H14v2.500C14 9 12.500 10 11 10H7c-1.500 0-2.500 1-2.500 2.500v3C4.500 17 6 18 8 18z" fill="#f6c41c"/></g></svg>
<div class="t" style="left:41px;top:11px;font-size:19px;color:#bbbbbb;"><span style="font-size:18px">显示二维列表数据</span>.py</div>
<svg class="abs" style="left:220px;top:14px" width="12" height="12" viewBox="0 0 12 12"><path d="M1 1l10 10 M11 1l-10 10" stroke="#64676a" stroke-width="1.400"/></svg>
</div>
<svg class="abs" style="left:1463px;top:12px" width="24" height="14" viewBox="0 0 24 14"><path d="M0 4h7l-3.500 5z" fill="#8a8c8e"/><path d="M10 2h12 M10 6.500h12 M10 11h12" stroke="#8a8c8e" stroke-width="1.500"/></svg>
<div class="t" style="left:1488px;top:11px;font-size:15px;color:#8a8c8e;">4</div>
</div>
<div id="editor" class="abs">
<div id="gutter" class="abs"></div>
<div class="abs" style="left:87px;top:399.5px;width:1417px;height:29.5px;background:#323232"></div>
<div class="abs" style="left:1179px;top:0;width:1px;height:638px;background:#3b3b3b"></div>
<div class="abs" style="left:87px;top:0;width:2px;height:638px;background:#555555"></div>
<div class="abs" style="left:138px;top:344.5px;width:1px;height:57px;background:#3d3d3d"></div>
<div class="abs" style="left:138px;top:458.5px;width:1px;height:228px;background:#3d3d3d"></div>
<div class="ln" style="top:2.5px">1</div>
<div class="cl" style="top:2.5px"><span class="c wv q">'''</span></div>
<div class="ln" style="top:31px">2</div>
<div class="cl" style="top:31px"><span class="c"><span class="z">设置单元格某一列排序</span></span></div>
<div class="ln" style="top:59.5px">3</div>
<div class="cl" style="top:59.5px"><span class="c">1.<span class="z">按哪一列进行排序</span></span></div>
<div class="ln" style="top:88px">4</div>
<div class="cl" style="top:88px"><span class="c">2.<span class="z">排序的类型：升序或者降序</span></span></div>
<div class="ln" style="top:116.5px">5</div>
<div class="cl" style="top:116.5px"><span class="c">sortItems(<span class="wv gw">columnindex</span>,orderType)</span></div>
<div class="ln" style="top:145px">6</div>
<div class="cl" style="top:145px"><span class="c wv q">'''</span></div>
<div class="ln" style="top:173.5px">7</div>
<div class="cl" style="top:173.5px"><span class="k">from</span> PyQt5.QtWidgets <span class="k">import</span> *</div>
<div class="ln" style="top:202px">8</div>
<div class="cl" style="top:202px"><span class="k">from</span> PyQt5.QtCore <span class="k">import</span> *</div>
<div class="ln" style="top:230.5px">9</div>
<div class="cl" style="top:230.5px"><span class="k">import</span> sys</div>
<div class="ln" style="top:259px">10</div>
<div class="cl" style="top:259px"></div>
<div class="ln" style="top:287.5px">11</div>
<div class="cl" style="top:287.5px"><span class="wv"><span class="k">class</span> columnsort(QWidget):</span></div>
<div class="ln" style="top:316px">12</div>
<div class="cl" style="top:316px">    <span class="k">def</span> <span class="m">__init__</span>(<span class="s">self</span>):</div>
<div class="ln" style="top:344.5px">13</div>
<div class="cl" style="top:344.5px">        <span class="b">super</span>(columnsort<span class="wv ow">,</span><span class="s">self</span>).<span class="m">__init__</span>()</div>
<div class="ln" style="top:373px">14</div>
<div class="cl" style="top:373px">        <span class="s">self</span>.initUI()</div>
<div class="ln" style="top:401.5px">15</div>
<div class="cl" style="top:401.5px"></div>
<div class="ln" style="top:430px">16</div>
<div class="cl" style="top:430px">    <span class="k">def</span> <span class="wv" style="color:#ffc66d">initUI</span>(<span class="s">self</span>):</div>
<div class="ln" style="top:458.5px">17</div>
<div class="cl" style="top:458.5px">        <span class="s">self</span>.setWindowTitle(<span class="st">"<span class="z">单元格按列排序</span>"</span>)</div>
<div class="ln" style="top:487px">18</div>
<div class="cl" style="top:487px">        <span class="s">self</span>.resize(<span class="n">1000</span><span class="wv ow">,</span><span class="n">500</span>)</div>
<div class="ln" style="top:515.5px">19</div>
<div class="cl" style="top:515.5px"></div>
<div class="ln" style="top:544px">20</div>
<div class="cl" style="top:544px">        layout<span class="wv">=</span>QHBoxLayout()  <span class="g wv">#<span class="z">列表水平布局</span></span></div>
<div class="ln" style="top:572.5px">21</div>
<div class="cl" style="top:572.5px">        <span class="wv"><span class="s">self</span>.tablewidget=</span>QTableWidget()</div>
<div class="ln" style="top:601px">22</div>
<div class="cl" style="top:601px">        <span class="s">self</span>.tablewidget.setRowCount(<span class="n">4</span>)</div>
<div class="ln" style="top:629.5px">23</div>
<div class="cl" style="top:629.5px">        <span class="s">self</span>.tablewidget.setColumnCount(<span class="n">3</span>)</div>
<svg class="abs" style="left:79.500px;top:9px" width="17" height="19" viewBox="0 0 15 17"><path d="M1 1h13v9l-6.500 6.500L1 10z" fill="#2b2b2b" stroke="#6b6b6b" stroke-width="1.300"/><path d="M4 6h7" stroke="#6b6b6b" stroke-width="1.300"/></svg>
<svg class="abs" style="left:79.500px;top:151.5px" width="17" height="19" viewBox="0 0 15 17"><path d="M1 16h13V7L7.500 .500 1 7z" fill="#2b2b2b" stroke="#6b6b6b" stroke-width="1.300"/><path d="M4 11h7" stroke="#6b6b6b" stroke-width="1.300"/></svg>
<svg class="abs" style="left:79.500px;top:180px" width="17" height="19" viewBox="0 0 15 17"><path d="M1 1h13v9l-6.500 6.500L1 10z" fill="#2b2b2b" stroke="#6b6b6b" stroke-width="1.300"/><path d="M4 6h7" stroke="#6b6b6b" stroke-width="1.300"/></svg>
<svg class="abs" style="left:79.500px;top:237px" width="17" height="19" viewBox="0 0 15 17"><path d="M1 16h13V7L7.500 .500 1 7z" fill="#2b2b2b" stroke="#6b6b6b" stroke-width="1.300"/><path d="M4 11h7" stroke="#6b6b6b" stroke-width="1.300"/></svg>
<svg class="abs" style="left:79.500px;top:294px" width="17" height="19" viewBox="0 0 15 17"><path d="M1 1h13v9l-6.500 6.500L1 10z" fill="#2b2b2b" stroke="#6b6b6b" stroke-width="1.300"/><path d="M4 6h7" stroke="#6b6b6b" stroke-width="1.300"/></svg>
<svg class="abs" style="left:79.500px;top:322.5px" width="17" height="19" viewBox="0 0 15 17"><path d="M1 1h13v9l-6.500 6.500L1 10z" fill="#2b2b2b" stroke="#6b6b6b" stroke-width="1.300"/><path d="M4 6h7" stroke="#6b6b6b" stroke-width="1.300"/></svg>
<svg class="abs" style="left:79.500px;top:379.5px" width="17" height="19" viewBox="0 0 15 17"><path d="M1 16h13V7L7.500 .500 1 7z" fill="#2b2b2b" stroke="#6b6b6b" stroke-width="1.300"/><path d="M4 11h7" stroke="#6b6b6b" stroke-width="1.300"/></svg>
<svg class="abs" style="left:79.500px;top:436.5px" width="17" height="19" viewBox="0 0 15 17"><path d="M1 1h13v9l-6.500 6.500L1 10z" fill="#2b2b2b" stroke="#6b6b6b" stroke-width="1.300"/><path d="M4 6h7" stroke="#6b6b6b" stroke-width="1.300"/></svg>
<div class="abs" style="left:1486px;top:3px;width:15px;height:15px;background:#d9a016"></div>
<div class="abs" style="left:1492px;top:27px;width:10px;height:176px;background:#6a6c6e;opacity:.75;border-radius:1px"></div>
<div class="abs" style="left:1484px;top:25px;width:7px;height:3px;background:#7d7a6c"></div>
<div class="abs" style="left:1484px;top:64px;width:7px;height:3px;background:#7d7a6c"></div>
<div class="abs" style="left:1484px;top:105px;width:7px;height:3px;background:#7d7a6c"></div>
<div class="abs" style="left:1484px;top:121px;width:7px;height:3px;background:#7d7a6c"></div>
<div class="abs" style="left:1484px;top:146px;width:7px;height:3px;background:#7d7a6c"></div>
<div class="abs" style="left:1484px;top:162px;width:7px;height:3px;background:#7d7a6c"></div>
<div class="abs" style="left:1484px;top:178px;width:7px;height:3px;background:#7d7a6c"></div>
<div class="abs" style="left:1484px;top:185px;width:7px;height:3px;background:#7d7a6c"></div>
<div class="abs" style="left:1484px;top:226px;width:20px;height:3px;background:#847d74"></div>
<div class="abs" style="left:1484px;top:242px;width:20px;height:3px;background:#847d74"></div>
<div class="abs" style="left:1484px;top:251px;width:20px;height:3px;background:#847d74"></div>
<div class="abs" style="left:1484px;top:267px;width:20px;height:3px;background:#847d74"></div>
<div class="abs" style="left:1484px;top:275px;width:20px;height:3px;background:#847d74"></div>
<div class="abs" style="left:1484px;top:283px;width:20px;height:3px;background:#847d74"></div>
<div class="abs" style="left:1484px;top:324px;width:20px;height:3px;background:#847d74"></div>
<div class="abs" style="left:1484px;top:412px;width:20px;height:3px;background:#847d74"></div>
<div class="abs" style="left:1484px;top:420px;width:20px;height:3px;background:#847d74"></div>
<div class="abs" style="left:1484px;top:460px;width:20px;height:3px;background:#847d74"></div>
<div class="abs" style="left:1484px;top:500px;width:20px;height:3px;background:#847d74"></div>
<div class="abs" style="left:1484px;top:517px;width:20px;height:3px;background:#847d74"></div>
<div class="abs" style="left:1484px;top:534px;width:20px;height:3px;background:#847d74"></div>
<div class="abs" style="left:1484px;top:541px;width:20px;height:3px;background:#847d74"></div>
<div class="abs" style="left:1484px;top:558px;width:20px;height:3px;background:#847d74"></div>
<div class="abs" style="left:1484px;top:565px;width:20px;height:3px;background:#847d74"></div>
<div class="abs" style="left:1484px;top:572px;width:20px;height:3px;background:#847d74"></div>
<div class="abs" style="left:1484px;top:589px;width:20px;height:3px;background:#847d74"></div>
<div class="abs" style="left:1484px;top:429px;width:20px;height:3px;background:#d9a520"></div>
<div class="abs" style="left:1484px;top:436px;width:20px;height:3px;background:#d9a520"></div>
</div>
<div id="crumbs" class="abs">
<div class="t" style="left:102px;top:9px;font-size:19.5px;color:#bbbbbb;">columnsort</div>
</div>
<div id="runbar" class="abs">
<div class="t" style="left:11px;top:10px;font-size:19px;color:#bbbbbb;">Run:</div>
<svg class="abs" style="left:78px;top:8px" width="22" height="22" viewBox="0 0 18 18"><path d="M8 0C5.500 0 5 1 5 2.500V4h4v1H3C1 5 0 6.500 0 9s1 4 2.500 4H4v-2.500C4 9 5.500 8 7 8h4c1.500 0 2.500-1 2.500-2.500v-3C13.500 1 12 0 10 0z" fill="#3f6b8c"/><path d="M10 18c2.500 0 3-1 3-2.500V14H9v-1h6c2 0 3-1.500 3-4s-1-4-2.500-4H14v2.500C14 9 12.500 10 11 10H7c-1.500 0-2.500 1-2.500 2.500v3C4.500 17 6 18 8 18z" fill="#8a7536"/></svg>
<div class="t" style="left:106px;top:11px;font-size:18px;color:#bbbbbb;">显示二维列表数据</div>
<svg class="abs" style="left:260px;top:15px" width="11" height="11" viewBox="0 0 11 11"><path d="M1 1l9 9 M10 1l-9 9" stroke="#6e7073" stroke-width="1.400"/></svg>
<div class="abs" style="left:290px;top:0;width:230px;height:37px;background:#36393b"></div>
<svg class="abs" style="left:309px;top:8px" width="22" height="22" viewBox="0 0 18 18"><path d="M8 0C5.500 0 5 1 5 2.500V4h4v1H3C1 5 0 6.500 0 9s1 4 2.500 4H4v-2.500C4 9 5.500 8 7 8h4c1.500 0 2.500-1 2.500-2.500v-3C13.500 1 12 0 10 0z" fill="#3e9bd3"/><path d="M10 18c2.500 0 3-1 3-2.500V14H9v-1h6c2 0 3-1.500 3-4s-1-4-2.500-4H14v2.500C14 9 12.500 10 11 10H7c-1.500 0-2.500 1-2.500 2.500v3C4.500 17 6 18 8 18z" fill="#f6c41c"/><circle cx="14.500" cy="15" r="3" fill="#3fd12f"/></svg>
<div class="t" style="left:338px;top:11px;font-size:18px;color:#bbbbbb;">单元格某一列排序</div>
<svg class="abs" style="left:491px;top:15px" width="11" height="11" viewBox="0 0 11 11"><path d="M1 1l9 9 M10 1l-9 9" stroke="#6e7073" stroke-width="1.400"/></svg>
<svg class="abs" style="left:1786px;top:8px" width="20" height="20" viewBox="-10 -10 20 20"><g fill="#afb1b3"><circle r="7"/><rect x="-2.600" y="-9.900" width="5.200" height="6" rx=".6" transform="rotate(0)"/><rect x="-2.600" y="-9.900" width="5.200" height="6" rx=".6" transform="rotate(60)"/><rect x="-2.600" y="-9.900" width="5.200" height="6" rx=".6" transform="rotate(120)"/><rect x="-2.600" y="-9.900" width="5.200" height="6" rx=".6" transform="rotate(180)"/><rect x="-2.600" y="-9.900" width="5.200" height="6" rx=".6" transform="rotate(240)"/><rect x="-2.600" y="-9.900" width="5.200" height="6" rx=".6" transform="rotate(300)"/></g><circle r="2.900" fill="#3c3f41"/></svg>
<div class="abs" style="left:1826px;top:17px;width:18px;height:3px;background:#c0c2c4"></div>
</div>
<div id="console" class="abs">
<div class="abs" style="left:0;top:0;width:43px;height:79px;background:#3c3f41;border-right:1px solid #323232"></div>
<div class="abs" style="left:43px;top:0;width:44px;height:79px;background:#3c3f41;border-right:1px solid #323232"></div>
<svg class="abs" style="left:9px;top:11px" width="24" height="24" viewBox="0 0 24 24"><path d="M17 7a8 8 0 1 0 2 8" fill="none" stroke="#499c54" stroke-width="3"/><path d="M11 1h8v8z" fill="#499c54" transform="rotate(8 15 5)"/><rect x="14" y="16" width="7" height="7" fill="#afb1b3"/></svg>
<svg class="abs" style="left:56px;top:13px" width="18" height="20" viewBox="0 0 18 20"><path d="M9 2v17 M2 9l7-7 7 7" fill="none" stroke="#5e6062" stroke-width="2.400"/></svg>
<svg class="abs" style="left:15px;top:73px" width="12" height="6" viewBox="0 0 12 6"><path d="M1 0l4 6 M6 0l4 6" stroke="#8a8c8e" stroke-width="1.500"/></svg>
<svg class="abs" style="left:59px;top:73px" width="12" height="6" viewBox="0 0 12 6"><path d="M1 0l4 6 M6 0l4 6" stroke="#8a8c8e" stroke-width="1.500"/></svg>
<div class="t mono con" style="left:106px;top:8.500px;font-size:15px;color:#bbbbbb;font-family:'Liberation Mono','Noto Serif CJK SC',monospace">D:\Install\ANACONDA\python.exe "D:/Byrbt2018/Recent study file/python<span class="z">学习文件</span>/PyQt5<span class="z">学习文件</span>/PyQt5<span class="z">二维数据及表格操作</span>-2020-02-11/<span class="z">单元格某一列排序</span>.py"</div>
</div>
<div id="rightstrip" class="abs">
<svg class="abs" style="left:8px;top:17px" width="17" height="15" viewBox="0 0 17 15"><path d="M0 0h17v3H0z M0 5h4v3H0z M6 5h5v3H6z M13 5h4v3h-4z M0 10h4v3H0z M6 10h5v3H6z M13 10h4v3h-4z" fill="#afb1b3"/></svg>
<div class="t" style="left:15px;top:71px;font-size:17px;color:#bbbbbb;transform:translate(-50%,-50%) rotate(90deg)">SciView</div>
<svg class="abs" style="left:8px;top:137px" width="17" height="20" viewBox="0 0 17 20"><ellipse cx="8.500" cy="3.500" rx="8" ry="3.500" fill="#afb1b3"/><path d="M.5 6c2 3 14 3 16 0v3c-2 3-14 3-16 0z M.5 10.500c2 3 14 3 16 0v3c-2 3-14 3-16 0z M.5 15c2 3 14 3 16 0v2c-2 4-14 4-16 0z" fill="#afb1b3"/></svg>
<div class="t" style="left:15px;top:199px;font-size:17px;color:#bbbbbb;transform:translate(-50%,-50%) rotate(90deg)">Database</div>
</div>
<div class="abs" style="left:1906px;top:921px;width:30px;height:30px;border:2px solid #2a2f45;border-radius:4px;background:#3a405a"></div>
<div class="abs" id="qt" style="left:784px;top:179px;width:1000px;height:544px;background:#f0f0f0;box-shadow:0 0 14px rgba(0,0,0,.45);font-family:'Liberation Sans','Noto Sans CJK SC',sans-serif;color:#000">
<div class="abs" style="left:0;top:0;width:1000px;height:44px;background:#ffffff"></div>
<svg class="abs" style="left:11px;top:13px" width="23" height="17" viewBox="0 0 23 17"><rect x=".5" y=".5" width="22" height="16" fill="#fdfdfd" stroke="#b9c3c9"/><rect x="2" y="3" width="10" height="11" fill="#3f8f8a"/><rect x="13" y="3" width="8" height="11" fill="#e8eef0"/><rect x="18" y="4" width="2" height="5" fill="#3f8f8a"/></svg>
<div class="t" style="left:40px;top:13px;font-size:18px;color:#000000;">单元格按列排序</div>
<svg class="abs" style="left:810px;top:0" width="190" height="43" viewBox="0 0 190 43"><path d="M8 21.500h15" stroke="#000" stroke-width="1"/><rect x="77.500" y="14.500" width="14" height="14" stroke="#000" stroke-width="1" fill="none"/><path d="M148 14.500l14 14 M162 14.500l-14 14" stroke="#000" stroke-width="1.300"/></svg>
<div class="abs" style="left:16px;top:60px;width:726px;height:468px;background:#ffffff;border:1px solid #7f7f7f"></div>
<div class="abs" style="left:17px;top:61px;width:22px;height:466px;background:#f0f0f0"></div>
<div class="abs" style="left:17px;top:61px;width:22px;height:217px;background:#ffffff"></div>
<div class="abs" style="left:39px;top:61px;width:1px;height:217px;background:#d8d8d8"></div>
<div class="abs" style="left:189px;top:61px;width:1px;height:217px;background:#d8d8d8"></div>
<div class="abs" style="left:339px;top:61px;width:1px;height:217px;background:#d8d8d8"></div>
<div class="abs" style="left:489px;top:61px;width:1px;height:217px;background:#d8d8d8"></div>
<div class="abs" style="left:39px;top:142px;width:451px;height:1px;background:#d8d8d8"></div>
<div class="abs" style="left:39px;top:187px;width:451px;height:1px;background:#d8d8d8"></div>
<div class="abs" style="left:39px;top:232px;width:451px;height:1px;background:#d8d8d8"></div>
<div class="abs" style="left:39px;top:277px;width:451px;height:1px;background:#d8d8d8"></div>
<div class="t" style="left:114px;top:72px;width:150px;margin-left:-75px;text-align:center;font-size:18px;color:#000">省份</div>
<div class="t" style="left:264px;top:72px;width:150px;margin-left:-75px;text-align:center;font-size:18px;color:#000">增加人数</div>
<div class="t" style="left:414px;top:72px;width:150px;margin-left:-75px;text-align:center;font-size:18px;color:#000">患病累计人数</div>
<div class="t" style="left:23px;top:111px;font-size:19px;color:#000;">1</div>
<div class="t" style="left:43px;top:112px;font-size:18px;color:#000;">甘肃</div>
<div class="t" style="left:193px;top:111px;font-size:19px;color:#000;">3</div>
<div class="t" style="left:343px;top:111px;font-size:19px;color:#000;">85</div>
<div class="t" style="left:23px;top:156px;font-size:19px;color:#000;">2</div>
<div class="t" style="left:43px;top:157px;font-size:18px;color:#000;">北京</div>
<div class="t" style="left:193px;top:156px;font-size:19px;color:#000;">5</div>
<div class="t" style="left:343px;top:156px;font-size:19px;color:#000;">356</div>
<div class="t" style="left:23px;top:201px;font-size:19px;color:#000;">3</div>
<div class="t" style="left:43px;top:202px;font-size:18px;color:#000;">湖北</div>
<div class="t" style="left:193px;top:201px;font-size:19px;color:#000;">2061</div>
<div class="t" style="left:343px;top:201px;font-size:19px;color:#000;">31234</div>
<div class="t" style="left:23px;top:246px;font-size:19px;color:#000;">4</div>
<div class="t" style="left:43px;top:247px;font-size:18px;color:#000;"></div>
<div class="t" style="left:193px;top:246px;font-size:19px;color:#000;"></div>
<div class="t" style="left:343px;top:246px;font-size:19px;color:#000;"></div>
<div class="abs" style="left:752px;top:278px;width:110px;height:32px;background:#e1e1e1;border:1px solid #adadad;font-family:'Liberation Serif','Noto Serif CJK SC',serif;font-size:18px;font-weight:300;line-height:31px;text-align:center;color:#111">按总数排序</div>
<div class="abs" style="left:873px;top:278px;width:110px;height:32px;background:#e5f1fb;border:1px solid #2f78b8;font-family:'Liberation Serif','Noto Serif CJK SC',serif;font-size:18px;font-weight:300;line-height:31px;text-align:center;color:#111">按日增排序</div>
</div>
</body></html>
